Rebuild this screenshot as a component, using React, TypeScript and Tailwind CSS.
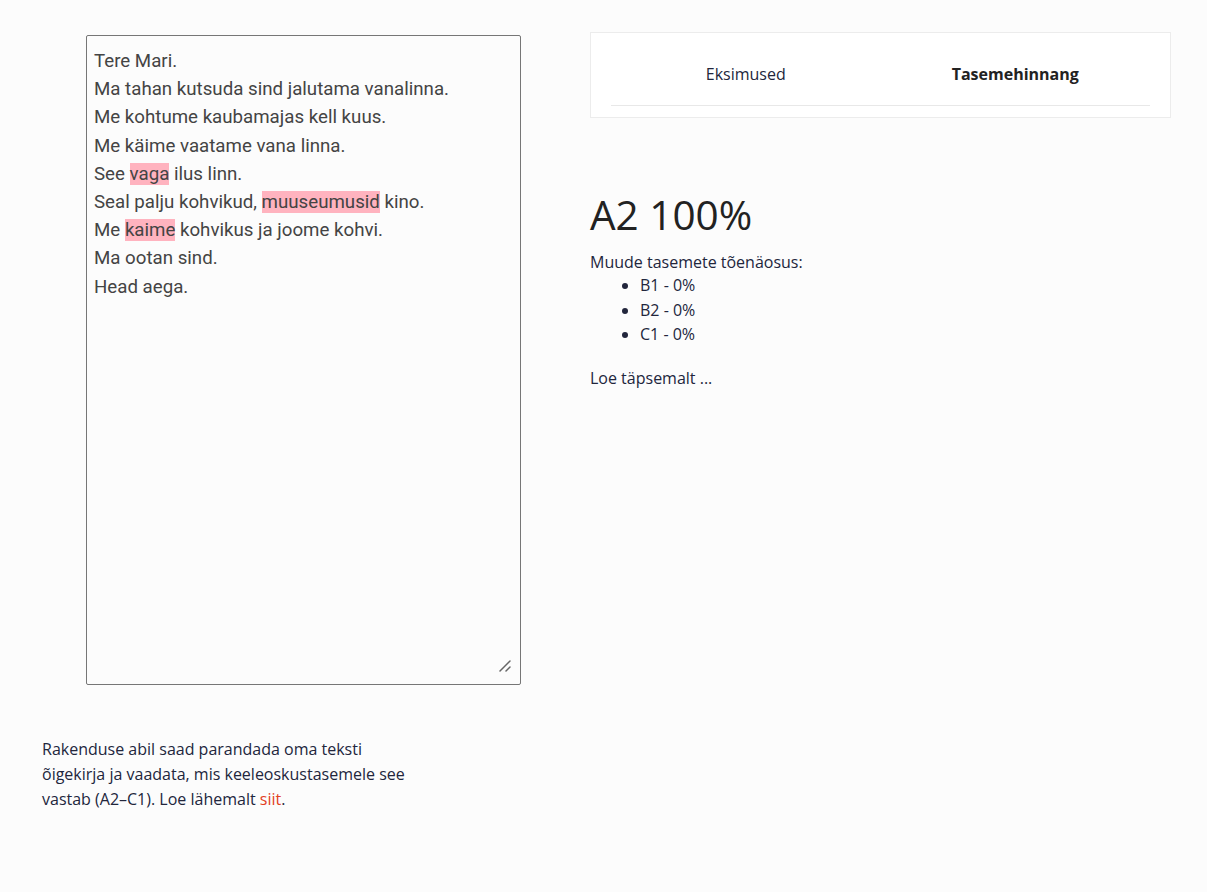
import React from 'react';

const lines: React.ReactNode[] = [
  'Tere Mari.',
  'Ma tahan kutsuda sind jalutama vanalinna.',
  'Me kohtume kaubamajas kell kuus.',
  'Me käime vaatame vana linna.',
  <>See <Mark>vaga</Mark> ilus linn.</>,
  <>Seal palju kohvikud, <Mark>muuseumusid</Mark> kino.</>,
  <>Me <Mark>kaime</Mark> kohvikus ja joome kohvi.</>,
  'Ma ootan sind.',
  'Head aega.',
];

function Mark({ children }: { children: React.ReactNode }) {
  return <span className="bg-[#ffb3bf]">{children}</span>;
}

export default function App() {
  return (
    <div className="min-h-[892px] bg-[#fcfcfc] font-['Open_Sans',sans-serif] text-[16px] leading-[24px] text-[#22263c]">
      <div className="flex px-[42px]">
        {/* Left: editor + intro */}
        <div className="w-[479px] shrink-0">
          <div className="relative ml-[44px] mt-[35px] h-[650px] w-[435px] rounded-[2px] border border-[#767676] bg-[#fcfcfc] px-[7px] pt-[11px] font-['Roboto',sans-serif] text-[18.7px] leading-[28.2px] text-[#444]">
            {lines.map((l, i) => (
              <div key={i}>{l}</div>
            ))}
            {/* resize grip */}
            <svg
              className="absolute bottom-[12px] right-[9px]"
              width="12"
              height="12"
              viewBox="0 0 12 12"
            >
              <path d="M1 11 L11 1 M7 11 L11 7" stroke="#666" strokeWidth="1.5" strokeLinecap="round" />
            </svg>
          </div>
          <p className="mt-[52px] w-[380px] leading-[25px]">
            Rakenduse abil saad parandada oma teksti õigekirja ja vaadata, mis
            keeleoskustasemele see vastab (A2–C1). Loe lähemalt{' '}
            <a className="text-[#e2401f]">siit</a>.
          </p>
        </div>

        {/* Right: tabs + result */}
        <div className="ml-[69px] w-[581px] shrink-0 pt-[32px]">
          <div className="border border-[#ececec] bg-white px-5 pb-[11px] pt-2">
            <div className="flex h-[65px] border-b border-[#e8e8e8]">
              <button className="flex flex-1 items-center justify-center pt-[1px] text-[#22263c]">
                Eksimused
              </button>
              <button className="flex flex-1 items-center justify-center pt-[1px] font-bold text-[#222]">
                Tasemehinnang
              </button>
            </div>
          </div>

          <h1 className="mt-[73px] text-[40.5px] leading-[48px] text-[#222]">A2 100%</h1>
          <div className="mt-[11px]">Muude tasemete tõenäosus:</div>
          <ul className="-mt-px list-disc pl-[50px] leading-[24.5px]">
            <li>B1 - 0%</li>
            <li>B2 - 0%</li>
            <li>C1 - 0%</li>
          </ul>
          <p className="mt-[19px]">Loe täpsemalt ...</p>
        </div>
      </div>
    </div>
  );
}
